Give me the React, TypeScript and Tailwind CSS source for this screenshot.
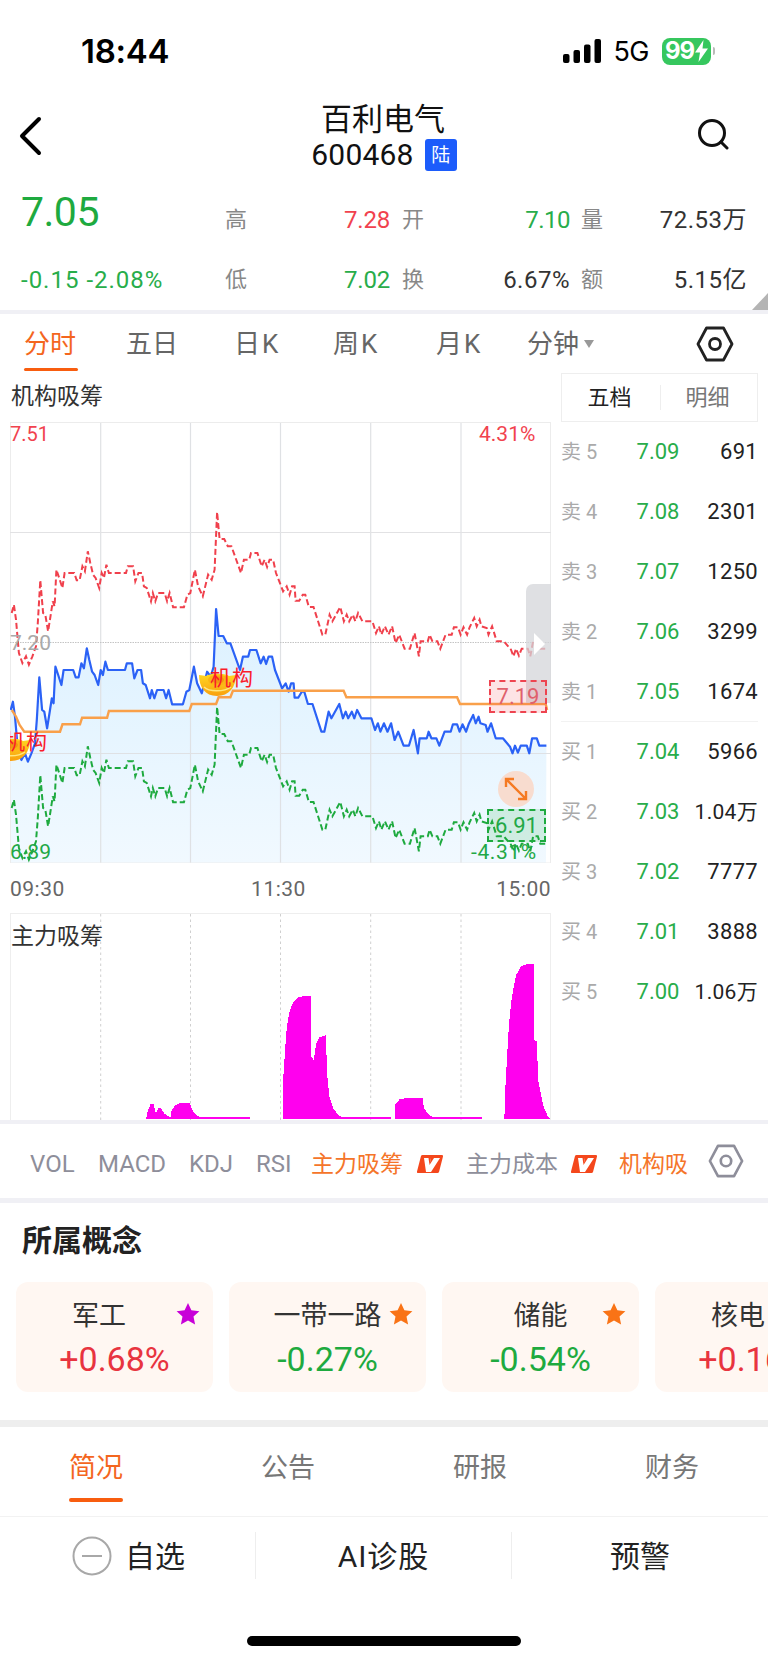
import React from "react";

const bluePts: [number, number][] = [[30,930],[36,905],[42,950],[50,1050],[60,1080],[70,1060],[78,1085],[88,1060],[98,1030],[103,960],[110,832],[118,930],[124,935],[132,985],[140,930],[145,895],[150,910],[155,800],[163,825],[172,855],[178,810],[205,810],[212,832],[220,832],[228,790],[235,805],[243,745],[250,780],[258,815],[265,825],[275,855],[282,810],[288,825],[295,785],[302,810],[350,810],[355,790],[370,790],[376,835],[385,810],[395,810],[400,850],[408,855],[420,895],[425,870],[432,895],[440,870],[458,870],[465,895],[472,870],[482,913],[512,913],[522,875],[530,870],[543,800],[552,850],[565,880],[580,815],[590,830],[598,800],[605,627],[612,708],[625,708],[635,730],[645,730],[672,810],[680,770],[695,770],[700,750],[718,750],[730,790],[738,770],[745,792],[752,770],[762,770],[770,810],[790,865],[800,850],[808,875],[815,850],[822,850],[825,893],[835,893],[845,875],[852,875],[862,912],[875,912],[900,995],[908,995],[920,935],[928,955],[950,912],[960,955],[968,935],[975,955],[985,935],[992,955],[1000,930],[1012,955],[1040,955],[1050,990],[1058,970],[1065,995],[1075,970],[1085,995],[1095,970],[1105,1020],[1115,995],[1130,1037],[1145,1037],[1158,990],[1170,1060],[1175,1015],[1195,1015],[1200,995],[1208,1015],[1222,1015],[1230,1037],[1245,995],[1262,995],[1268,973],[1280,973],[1287,995],[1295,973],[1305,995],[1312,973],[1325,945],[1332,970],[1340,950],[1345,970],[1360,975],[1365,995],[1375,970],[1388,1015],[1408,1015],[1428,1040],[1435,1060],[1442,1037],[1450,1058],[1458,1037],[1475,1037],[1482,1060],[1490,1015],[1503,1015],[1510,1037],[1530,1037]];
const orangePts: [number, number][] = [[33,930],[45,950],[55,975],[68,995],[168,995],[175,973],[224,973],[230,953],[300,953],[305,933],[530,933],[537,912],[605,912],[612,892],[645,892],[652,872],[962,872],[970,892],[1280,892],[1288,912],[1528,912],[1532,930]];

const toPath = (pts: [number, number][], dx = 0, dy = 0) =>
  pts.map(([x, y], i) => `${i ? "L" : "M"}${(x / 2.8 + dx).toFixed(1)} ${(400 + y / 3 + dy).toFixed(1)}`).join(" ");

const bars: [number, number][][] = [
  [[298,658],[300,640],[307,612],[313,612],[318,640],[323,625],[328,625],[335,640],[345,650],[348,652],[350,630],[358,615],[370,608],[387,608],[392,630],[400,645],[410,652],[510,652],[510,658]],
  [[577,658],[578,530],[582,440],[585,380],[590,340],[597,310],[608,292],[620,288],[635,288],[635,470],[640,480],[645,430],[652,412],[665,405],[667,520],[672,590],[680,625],[690,645],[700,652],[797,652],[797,658]],
  [[805,658],[806,615],[815,598],[830,594],[862,594],[865,625],[875,645],[885,652],[984,652],[984,658]],
  [[1029,658],[1030,590],[1034,480],[1038,380],[1043,305],[1048,260],[1053,225],[1062,200],[1075,192],[1090,192],[1090,420],[1095,425],[1098,540],[1105,595],[1110,625],[1118,650],[1124,658]],
];
const barPts = (pts: [number, number][]) => pts.map(([x, y]) => `${(x / 2.04).toFixed(1)},${(900 + y / 3).toFixed(1)}`).join(" ");

const gridX = [100.7, 190.5, 280.5, 370.7, 461];

const Hex = ({ size, color, sw }: { size: number; color: string; sw: number }) => (
  <svg width={size} height={size} viewBox="0 0 38 36" fill="none" stroke={color} strokeWidth={sw} strokeLinejoin="round">
    <path d="M10.5 2h17L36 18l-8.5 16h-17L2 18z" />
    <circle cx="19" cy="18" r="5.5" />
  </svg>
);

const VBadge = () => (
  <svg width="28" height="20" viewBox="0 0 28 20">
    <path d="M6.500 1H26q1.500 0 1 1.500l-4 15.500q-.4 1-1.500 1H2q-1.500 0-1-1.500l4-15.500Q5.400 1 6.500 1z" fill="#f4471c" />
    <path d="M8 4h4.500l1 7L15 4h9l-9 14h-5z" fill="#fff" />
    <path d="M15 4l-1.500 7L18 4z" fill="#f4471c" />
  </svg>
);

const Ingot = ({ className }: { className: string }) => (
  <svg className={className} width="37" height="24" viewBox="0 0 37 24">
    <defs>
      <linearGradient id="ing" x1="0" y1="0" x2="0" y2="1">
        <stop offset="0" stopColor="#ffd822" />
        <stop offset="1" stopColor="#f9a00e" />
      </linearGradient>
    </defs>
    <path d="M0 2c3 0 5 1 7 1 4-3 19-3 23 0 2 0 5-1 7-1 0 12-7 21-19 21S0 14 0 2z" fill="url(#ing)" />
    <ellipse cx="19" cy="7" rx="10" ry="5.500" fill="#f9b514" />
    <ellipse cx="19" cy="7" rx="6" ry="3.500" fill="#ee9a10" />
    <path d="M5 14c5 5 20 5 27 0" stroke="#ffe680" strokeWidth="1.500" fill="none" />
  </svg>
);

const Star = ({ color }: { color: string }) => (
  <svg width="24" height="24" viewBox="0 0 24 24" className="absolute right-[13px] top-[20px]">
    <path d="M12 1l3.400 7.300 8 .9-5.900 5.400 1.600 7.900L12 18.600 4.900 22.500l1.600-7.900L.6 9.200l8-.9z" fill={color} />
  </svg>
);

const book = [
  ["卖 5", "7.09", "691"], ["卖 4", "7.08", "2301"], ["卖 3", "7.07", "1250"], ["卖 2", "7.06", "3299"], ["卖 1", "7.05", "1674"],
  ["买 1", "7.04", "5966"], ["买 2", "7.03", "1.04万"], ["买 3", "7.02", "7777"], ["买 4", "7.01", "3888"], ["买 5", "7.00", "1.06万"],
];

const cards = [
  { name: "军工", pct: "+0.68%", up: true, star: "#c800d8", pr: "pr-[31px]" },
  { name: "一带一路", pct: "-0.27%", up: false, star: "#f97316", pr: "" },
  { name: "储能", pct: "-0.54%", up: false, star: "#f97316", pr: "" },
  { name: "核电", pct: "+0.16%", up: true, star: "#f97316", pr: "pr-[31px]" },
];

export default function App() {
  return (
    <div className="w-[768px] h-[1663px] bg-white overflow-hidden font-[Roboto,'Noto_Sans_CJK_SC',sans-serif] text-[#222]">
      {/* status bar */}
      <div className="h-[90px] flex items-center pt-[12px]">
        <div className="ml-[81px] text-[33px] font-semibold text-black font-[Inter,sans-serif] tracking-[-0.3px] leading-none">18:44</div>
        <div className="ml-auto mr-[53px] flex items-center">
          <svg width="38" height="24" viewBox="0 0 38 24" fill="#000">
            <rect x="0" y="15" width="6.500" height="9" rx="2" />
            <rect x="10.500" y="11" width="6.500" height="13" rx="2" />
            <rect x="21" y="5.500" width="6.500" height="18.500" rx="2" />
            <rect x="31.500" y="0" width="6.500" height="24" rx="2" />
          </svg>
          <span className="ml-[12px] text-[27px] leading-none text-black font-[Inter,sans-serif] tracking-[-0.5px]">5G</span>
          <div className="ml-[13px] w-[49px] h-[27px] rounded-[8px] bg-[#36c75e] flex items-center justify-center text-white text-[24px] font-bold leading-none font-[Inter,sans-serif] tracking-[-1px]">
            99
            <svg width="13" height="22" viewBox="0 0 13 22" fill="#fff" className="ml-[1px]"><path d="M8.500 0L0 12.500h5L3.500 22 13 8.500H7.500z" /></svg>
          </div>
          <div className="ml-[2px] w-[2px] h-[8px] rounded-r-sm bg-[#b8bcb8]" />
        </div>
      </div>

      {/* header */}
      <div className="relative h-[100px] flex flex-col items-center">
        <div className="mt-[13px] -ml-[2px] text-[31px] leading-[34px] text-[#111]">百利电气</div>
        <div className="mt-[2px] flex items-center">
          <span className="text-[30px] leading-[32px] tracking-[0.2px] text-[#111]">600468</span>
          <span className="ml-[11px] w-[32px] h-[32px] rounded-[3px] bg-[#1c5cfb] text-white text-[19px] leading-none flex items-center justify-center">陆</span>
        </div>
        <svg className="absolute left-[18px] top-[26px]" width="24" height="40" viewBox="0 0 24 40" fill="none" stroke="#000" strokeWidth="4" strokeLinecap="round" strokeLinejoin="round"><path d="M21 3L4 20l17 17" /></svg>
        <svg className="absolute left-[696px] top-[28px]" width="34" height="32" viewBox="0 0 34 32" fill="none" stroke="#111" strokeWidth="3" strokeLinecap="round"><circle cx="16" cy="15" r="12.500" /><path d="M25 24l6 6" /></svg>
      </div>

      {/* quote stats */}
      <div className="relative h-[120px] pl-[21px] grid grid-cols-[204px_21px_144px_34px_146px_33px_144px] grid-rows-[60px_60px] items-center text-[24px] leading-none">
        <div className="text-[41px] text-[#1eaa3f] leading-none pb-[15px] tracking-[-0.5px]">7.05</div>
        <div className="text-[#888] text-[22px]">高</div>
        <div className="text-right text-[#f1424e] tracking-[-0.2px]">7.28</div>
        <div className="text-right text-[#888] text-[22px]">开</div>
        <div className="text-right text-[#28ad4a] tracking-[-0.5px]">7.10</div>
        <div className="text-right text-[#888] text-[22px]">量</div>
        <div className="text-right text-[#333] tracking-[0.5px]">72.53万</div>
        <div className="text-[#28ad4a] tracking-[1px]">-0.15 -2.08%</div>
        <div className="text-[#888] text-[22px]">低</div>
        <div className="text-right text-[#28ad4a] tracking-[-0.2px]">7.02</div>
        <div className="text-right text-[#888] text-[22px]">换</div>
        <div className="text-right text-[#333] tracking-[0.5px]">6.67%</div>
        <div className="text-right text-[#888] text-[22px]">额</div>
        <div className="text-right text-[#333] tracking-[0.5px]">5.15亿</div>
        <div className="absolute right-0 bottom-0 w-0 h-0 border-l-[16px] border-l-transparent border-b-[17px] border-b-[#b4b4b4]" />
      </div>
      <div className="h-[4px] bg-[#f0f0f5]" />

      {/* period tabs */}
      <div className="relative h-[59px] pl-[24px] grid grid-cols-[102px_108px_99px_103px_91px_169px_40px] items-center text-[26px] leading-none text-[#666]">
        <div className="relative text-[#f4661e]">分时<div className="absolute left-0 top-[37px] w-[54px] h-[3px] rounded-full bg-[#f85d0f]" /></div>
        <div>五日</div>
        <div>日<span className="ml-[2px]">K</span></div>
        <div>周<span className="ml-[2px]">K</span></div>
        <div>月<span className="ml-[2px]">K</span></div>
        <div className="flex items-center">分钟<span className="ml-[5px] w-0 h-0 border-x-[5.500px] border-x-transparent border-t-[8px] border-t-[#999]" /></div>
        <div><Hex size={38} color="#222" sw={2.800} /></div>
      </div>

      {/* chart + order book */}
      <div className="flex h-[747px]">
        <div className="w-[551px] shrink-0 pl-[10px]">
          <div className="h-[49px] flex items-center text-[23px] leading-none text-[#333] pl-[1px] pb-[3px]">机构吸筹</div>
          <div className="relative w-[541px] h-[441px] overflow-hidden">
            <svg width="541" height="441" viewBox="10 422 541 441" className="block">
              <defs>
                <linearGradient id="area" x1="0" y1="0" x2="0" y2="1">
                  <stop offset="0" stopColor="#dcf1ff" />
                  <stop offset="1" stopColor="#f1f9ff" />
                </linearGradient>
              </defs>
              <path d={`${toPath(bluePts)} L546 863 L10.700 863 Z`} fill="url(#area)" />
              {gridX.map((x) => <line key={x} x1={x} x2={x} y1="422" y2="863" stroke="#dfe1e4" strokeWidth="1.200" />)}
              <rect x="10.500" y="422.500" width="540" height="440.500" fill="none" stroke="#ececec" strokeWidth="1" />
              <line x1="10" x2="551" y1="532.500" y2="532.500" stroke="#e2e2e4" strokeWidth="1.200" />
              <line x1="10" x2="551" y1="642.500" y2="642.500" stroke="#c4c4c4" strokeWidth="1" strokeDasharray="1.500 1" />
              <line x1="10" x2="551" y1="753.500" y2="753.500" stroke="#dfe1e4" strokeWidth="1.200" />
              <path d={toPath(bluePts, 1, -97)} fill="none" stroke="#f0404c" strokeWidth="2" strokeDasharray="6 3" />
              <path d={toPath(bluePts, 1, 98)} fill="none" stroke="#1eaa3f" strokeWidth="2" strokeDasharray="6 3" />
              <path d={toPath(bluePts)} fill="none" stroke="#2b62f6" strokeWidth="2.200" strokeLinejoin="round" />
              <path d={toPath(orangePts)} fill="none" stroke="#f9a04a" strokeWidth="2.400" />
            </svg>
            <span className="absolute left-0 top-[1px] text-[20px] leading-[22px] text-[#f1424e]">7.51</span>
            <span className="absolute left-[469px] top-[1px] text-[21px] leading-[22px] text-[#f1424e]">4.31%</span>
            <span className="absolute left-0 top-[209px] text-[21px] leading-[24px] text-[#aaa]">7.20</span>
            <span className="absolute left-0 top-[418px] text-[21px] leading-[24px] text-[#22a846]">6.89</span>
            <span className="absolute left-[461px] top-[419px] text-[21px] leading-[22px] text-[#22a846] tracking-[0.6px]">-4.31%</span>
            <Ingot className="absolute left-[189px] top-[251px]" />
            <span className="absolute left-[200px] top-[244px] text-[21px] leading-[24px] text-[#fa1c2a] tracking-[1px]">机构</span>
            <Ingot className="absolute left-[-17px] top-[316px]" />
            <span className="absolute left-[-6px] top-[308px] text-[21px] leading-[24px] text-[#fa1c2a] tracking-[1px]">机构</span>
            <div className="absolute left-[516px] top-[162px] w-[25px] h-[119px] rounded-tl-[7px] bg-[#d4d6d9]/75">
              <div className="absolute left-[8px] top-[49px] w-0 h-0 border-y-[11px] border-y-transparent border-l-[11px] border-l-white" />
            </div>
            <div className="absolute left-[479px] top-[258px] w-[58px] h-[33px] border-2 border-dashed border-[#ee4450] bg-[#f04050]/15 text-[22px] leading-[30px] text-[#e0606c] text-center">7.19</div>
            <div className="absolute left-[477px] top-[387px] w-[59px] h-[33px] border-2 border-dashed border-[#1eaa3f] bg-[#1eaa3f]/15 text-[22px] leading-[30px] text-[#22a846] text-center">6.91</div>
            <div className="absolute left-[488px] top-[349px] w-[36px] h-[36px] rounded-full bg-[#f8dccf] flex items-center justify-center">
              <svg width="24" height="24" viewBox="0 0 24 24" fill="none" stroke="#f57a23" strokeWidth="2.400"><path d="M2 10V2h8M2 2l20 20M22 14v8h-8" /></svg>
            </div>
          </div>
          <div className="h-[50px] w-[541px] flex items-center justify-between text-[21px] leading-none text-[#666] tracking-[0.5px] pt-[2px]">
            <span>09:30</span><span className="-ml-[4px]">11:30</span><span>15:00</span>
          </div>
          <div className="relative w-[541px] h-[207px]">
            <svg width="541" height="207" viewBox="10 913 541 207" className="block">
              <rect x="10.500" y="913.500" width="540" height="210" fill="none" stroke="#eeeeee" strokeWidth="1" />
              {gridX.map((x) => <line key={x} x1={x} x2={x} y1="914" y2="1120" stroke="#cfcfcf" strokeWidth="1" strokeDasharray="2.500 3" />)}
              {bars.map((b, i) => <polygon key={i} points={barPts(b)} fill="#ff00ee" shapeRendering="crispEdges" />)}
            </svg>
            <span className="absolute left-[1px] top-[12px] text-[23px] leading-[24px] text-[#333]">主力吸筹</span>
          </div>
        </div>

        <div className="ml-[10px] w-[197px] shrink-0">
          <div className="h-[49px] border border-[#eeeeee] flex items-center text-[22px] leading-none">
            <span className="w-[98px] text-center text-[#222] pr-[3px]">五档</span>
            <span className="h-[25px] w-px bg-[#eeeeee]" />
            <span className="flex-1 text-center text-[#777] pr-[3px]">明细</span>
          </div>
          {book.map(([l, p, v], i) => (
            <div key={l} className={`h-[60px] grid grid-cols-[72px_50px_1fr] items-center text-[22px] leading-none ${i === 4 ? "border-b border-[#f2f2f2]" : ""}`}>
              <span className="text-[#aaa] text-[20px]">{l}</span>
              <span className="text-[#28ad4a] text-center">{p}</span>
              <span className={`text-right text-[#222] ${v.length > 4 ? "text-[21px] tracking-[0.3px]" : "tracking-[0.3px]"}`}>{v}</span>
            </div>
          ))}
        </div>
      </div>

      <div className="h-[4px] bg-[#f0f0f5]" />

      {/* indicators */}
      <div className="h-[74px] pl-[30px] pt-[6px] grid grid-cols-[68px_91px_67px_55px_105px_50px_104px_49px_89px_40px] items-center text-[23px] leading-none text-[#8e8e9a]">
        <span className="text-[24px]">VOL</span>
        <span className="text-[24px]">MACD</span>
        <span className="text-[24px]">KDJ</span>
        <span className="text-[24px]">RSI</span>
        <span className="text-[#f5752a]">主力吸筹</span>
        <VBadge />
        <span>主力成本</span>
        <VBadge />
        <span className="text-[#f5752a]">机构吸</span>
        <span className="-mt-[6px]"><Hex size={36} color="#8e8e9a" sw={2.800} /></span>
      </div>
      <div className="h-[5px] bg-[#f0f0f5]" />

      {/* concepts */}
      <div className="h-[217px]">
        <div className="h-[79px] pl-[22px] pt-[21px] text-[30px] leading-[34px] font-bold text-[#222]">所属概念</div>
        <div className="flex gap-[16px] pl-[16px] overflow-hidden">
          {cards.map((c) => (
            <div key={c.name} className="relative w-[197px] h-[110px] shrink-0 rounded-[12px] bg-[#fff7f2] flex flex-col items-center">
              <div className={`mt-[18px] w-full text-center text-[27px] leading-[32px] text-[#333] ${c.pr}`}>{c.name}</div>
              <div className={`mt-[9px] text-[34px] leading-[36px] ${c.up ? "text-[#e8343f]" : "text-[#1eaa3f]"}`}>{c.pct}</div>
              <Star color={c.star} />
            </div>
          ))}
        </div>
      </div>
      <div className="h-[7px] bg-[#eeeeee]" />

      {/* detail tabs */}
      <div className="h-[90px] grid grid-cols-4 text-[27px] leading-none text-[#777] border-b border-[#f2f2f2]">
        <div className="relative flex items-center justify-center pb-[6px] text-[#f4661e]">简况<div className="absolute left-[69px] top-[71px] w-[54px] h-[4px] rounded-full bg-[#f85d0f]" /></div>
        <div className="flex items-center justify-center pb-[6px]">公告</div>
        <div className="flex items-center justify-center pb-[6px]">研报</div>
        <div className="flex items-center justify-center pb-[6px]">财务</div>
      </div>

      {/* bottom actions */}
      <div className="mt-[15px] h-[47px] grid grid-cols-3 text-[30px] leading-none text-[#222]">
        <div className="flex items-center border-r border-[#eeeeee] pl-[72px]">
          <svg width="40" height="40" viewBox="0 0 40 40" fill="none" stroke="#a8a8a8"><circle cx="20" cy="20" r="18.500" strokeWidth="2" /><path d="M10 20h20" strokeWidth="2" /></svg>
          <span className="ml-[13px] pt-[3px]">自选</span>
        </div>
        <div className="flex items-center justify-center border-r border-[#eeeeee] pt-[3px] tracking-[1px]">AI诊股</div>
        <div className="flex items-center justify-center pt-[3px]">预警</div>
      </div>
      <div className="mt-[57px] mx-auto w-[274px] h-[10px] rounded-full bg-black" />
    </div>
  );
}
